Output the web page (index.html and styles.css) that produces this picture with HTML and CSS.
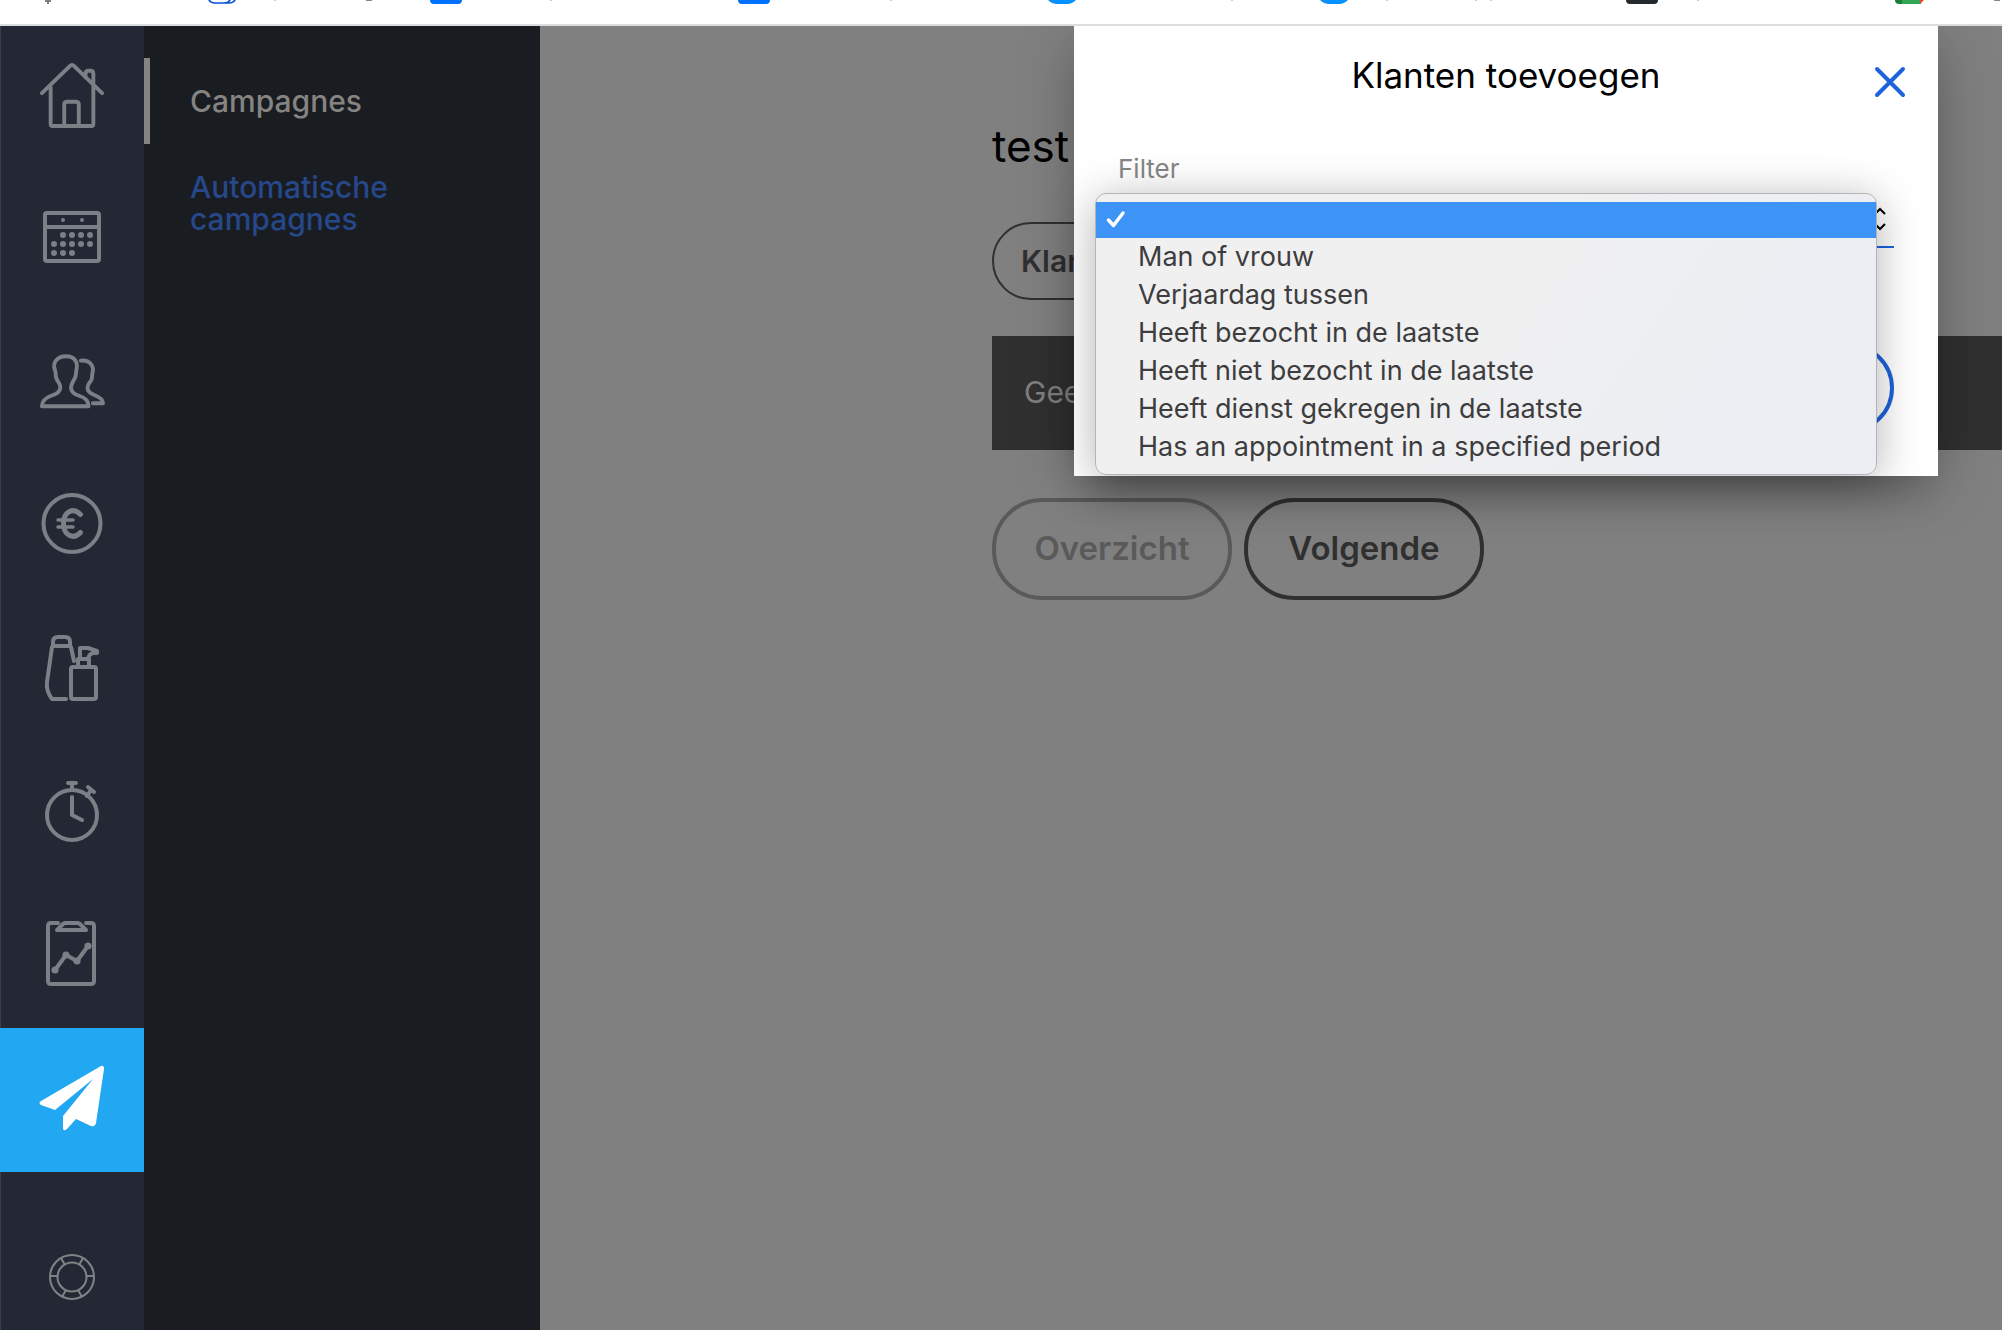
FILE: index.html
```
<!DOCTYPE html>
<html lang="nl">
<head>
<meta charset="utf-8">
<title>Campagnes</title>
<link rel="stylesheet" href="styles.css">
</head>
<body>
<div class="bookmarks" aria-hidden="true">
  <svg width="2002" height="24" viewBox="0 0 2002 24">
    <path d="M45 0h6v2h-2v2h-2V2h-2z" fill="#8a7a7a"/>
    <path d="M208 -3q1 6 7 6h9q6 0 7-6M223 3h6q6 0 7-6" fill="none" stroke="#0a53dc" stroke-width="1.6"/>
    <path d="M366 0h6v1h-6zM1994 0h6v1h-6z" fill="#888"/>
    <path d="M274 0h2v1h-2zM550 0h2v1h-2zM890 0h2v1h-2zM1231 0h2v1h-2zM1386 0h2v1h-2zM1475 0h2v1h-2zM1490 0h2v1h-2zM1697 0h2v1h-2z" fill="#ccc"/>
    <path d="M430 0h32q0 4-4 4h-24q-4 0-4-4zM738 0h32q0 4-4 4h-24q-4 0-4-4z" fill="#0070ff"/>
    <path d="M1048 0h28q-4 4-9 4h-10q-5 0-9-4zM1320 0h28q-4 4-9 4h-10q-5 0-9-4z" fill="#0792ff"/>
    <path d="M1626 0h32q0 4-4 4h-24q-4 0-4-4z" fill="#24292e"/>
    <path d="M1900 0h21v4h-21z" fill="#34a757"/>
    <path d="M1895 0h7v4h-3q-4 0-4-4z" fill="#188038"/>
    <path d="M1920 0h4l-4 4z" fill="#ea4335"/>
  </svg>
</div>

<div class="app">
  <nav class="rail" aria-label="Hoofdmenu">
    <a class="rail-item rail-first" href="#" aria-label="Home">
      <svg class="line-icon" width="66" height="68" viewBox="0 0 68 68">
        <path d="M3 32L32 4Q34 2 36 4L65 32M12 26V64q0 2 2 2h40q2 0 2-2V24M26 66V44q0-3 3-3h9q3 0 3 3v22M48 13V12q0-3 3-3h2q3 0 3 3v13M48 11v5"/>
      </svg>
    </a>
    <a class="rail-item" href="#" aria-label="Agenda">
      <svg class="line-icon" width="60" height="56" viewBox="0 -2 60 56">
        <rect x="3" y="3" width="54" height="48" rx="2"/>
        <path d="M3 17h54"/>
        <g class="solid">
          <circle cx="21" cy="10" r="2"/><circle cx="40" cy="10" r="2"/>
          <circle cx="21" cy="25" r="3"/><circle cx="30" cy="25" r="3"/><circle cx="39" cy="25" r="3"/><circle cx="48" cy="25" r="3"/>
          <circle cx="12" cy="34" r="3"/><circle cx="21" cy="34" r="3"/><circle cx="30" cy="34" r="3"/><circle cx="39" cy="34" r="3"/><circle cx="48" cy="34" r="3"/>
          <circle cx="12" cy="43" r="3"/><circle cx="21" cy="43" r="3"/><circle cx="30" cy="43" r="3"/>
        </g>
      </svg>
    </a>
    <a class="rail-item" href="#" aria-label="Klanten">
      <svg class="line-icon" width="66" height="58" viewBox="0 -2 68 58">
        <path d="M3 54C3 48 8 45 12 43.500C17 42 22 40 22 34.500C22 30 18 28 17.500 24C17 21 17.500 19 16.500 17C13 8 20 2.500 28 2.500C37 2.500 40.500 9 38.500 17C38 19 38.500 22 37 25C35.500 28 33 31 33 35C33 40 37 42 42 43.500C47 45 51 48 51 54Z"/>
        <path d="M43 7C53 6 57 13 55 20C54.500 22 55 24 54 27C53 29 50 31 50 35C50 39 53 41 57 42.500C62 44.500 66 47 66 51H55.500"/>
      </svg>
    </a>
    <a class="rail-item" href="#" aria-label="Kassa">
      <svg class="line-icon" width="64" height="64" viewBox="0 0 64 64">
        <circle cx="32" cy="31.500" r="28.500"/>
        <path d="M40.500 22.500C33 14.500 23.500 20 23.500 31.500s9.500 17 17 9" stroke-width="5"/>
        <path d="M18 28H33M18 35H33" stroke-width="3.500"/>
      </svg>
    </a>
    <a class="rail-item" href="#" aria-label="Producten">
      <svg class="line-icon" width="56" height="68" viewBox="0 0 56 68">
        <path d="M9 12V8q0-5 5-5h7q5 0 5 5v4zM8 13L3 48C2 56 5 61 8 65H22M27 13L30 27"/>
        <rect x="27" y="33" width="25" height="32" rx="2"/>
        <path d="M34 32V25h11v7M36 25V14H44L53 17V19H49Q45 20 44 25"/>
      </svg>
    </a>
    <a class="rail-item" href="#" aria-label="Werktijden">
      <svg class="line-icon" width="56" height="64" viewBox="0 1 56 64">
        <circle cx="28" cy="36" r="25"/>
        <path d="M28 18V36L38 41M24 4h8M28 4v6M44 8L50 13M47 11L43 17"/>
      </svg>
    </a>
    <a class="rail-item" href="#" aria-label="Rapporten">
      <svg class="line-icon" width="54" height="68" viewBox="-1 2 54 68">
        <path d="M12 3H5Q2 3 2 6V61Q2 64 5 64H45Q48 64 48 61V6Q48 3 45 3H40M11 10L17 4Q18 3 19 3H32Q33 3 34 4L40 10ZM9 50L20 35L31 41L42 26"/>
        <g class="solid"><circle cx="9" cy="50" r="3.600"/><circle cx="20" cy="35" r="3.600"/><circle cx="31" cy="41" r="3.600"/><circle cx="42" cy="26" r="3.600"/></g>
      </svg>
    </a>
    <a class="rail-item rail-active" href="#" aria-label="Campagnes" aria-current="page">
      <svg width="68" height="68" viewBox="0 2 68 68">
        <path fill="#fff" d="M63 2Q66 1 66 5L58 59Q57 63 53 62L38 55L29 65Q25 68 25 64V52L55 15L17 46L3 41Q0 39 3 37Z"/>
      </svg>
    </a>
    <a class="rail-help" href="#" aria-label="Hulp">
      <svg class="thin-icon" width="46" height="46" viewBox="0 0 46 46">
        <circle cx="23" cy="23" r="22"/><circle cx="23" cy="23" r="14.500"/>
        <path d="M1 22h8M37 22h8M12 4l4 7M34 4l-4 7M13 43l4-7M33 43l-4-7"/>
      </svg>
    </a>
  </nav>

  <nav class="subnav" aria-label="Campagnes">
    <a class="subnav-link subnav-current" href="#">Campagnes</a>
    <a class="subnav-link" href="#">Automatische campagnes</a>
  </nav>

  <main class="content">
    <h1 class="page-title">test</h1>
    <button class="pill" type="button">Klanten</button>
    <p class="empty">Geen</p>
    <div class="actions">
      <button class="big-button muted" type="button">Overzicht</button>
      <button class="big-button" type="button">Volgende</button>
    </div>
  </main>

  <section class="dialog" role="dialog" aria-labelledby="dialog-title">
    <h2 class="dialog-title" id="dialog-title">Klanten toevoegen</h2>
    <button class="close" type="button" aria-label="Sluiten">
      <svg width="30" height="30" viewBox="0 0 30 30"><path d="M2 2L28 28M28 2L2 28" stroke="#1d63dc" stroke-width="4" stroke-linecap="round"/></svg>
    </button>
    <label class="field-label" for="filter">Filter</label>
    <div class="select-wrap">
      <select class="select" id="filter"><option></option></select>
      <svg class="carets" width="12" height="24" viewBox="0 0 12 24"><path d="M1 7L6 2L11 7M1 17L6 22L11 17" fill="none" stroke="#000" stroke-width="2"/></svg>
      <ul class="menu" role="listbox" aria-label="Filter">
        <li class="option option-selected" role="option" aria-selected="true" aria-label="Geen filter">
          <svg width="20" height="18" viewBox="0 0 20 18"><path d="M2.500 9L7.500 14.500L17 2" fill="none" stroke="#fff" stroke-width="3.500" stroke-linecap="round" stroke-linejoin="round"/></svg>
        </li>
        <li class="option" role="option">Man of vrouw</li>
        <li class="option" role="option">Verjaardag tussen</li>
        <li class="option" role="option">Heeft bezocht in de laatste</li>
        <li class="option" role="option">Heeft niet bezocht in de laatste</li>
        <li class="option" role="option">Heeft dienst gekregen in de laatste</li>
        <li class="option" role="option">Has an appointment in a specified period</li>
      </ul>
    </div>
    <button class="submit" type="button" aria-label="Toevoegen"></button>
  </section>
</div>
</body>
</html>
```
FILE: styles.css
```
* {
  box-sizing: border-box;
}

body {
  margin: 0;
  min-height: 100vh;
  display: flex;
  flex-direction: column;
  font-family: Inter, "Liberation Sans", sans-serif;
  background: #808080;
}

a {
  text-decoration: none;
}

button {
  font-family: inherit;
  cursor: pointer;
}

svg {
  display: block;
  flex: none;
  overflow: visible;
}

.bookmarks {
  height: 26px;
  overflow: hidden;
  background: #fff;
  border-bottom: 2px solid #dcdde1;
}

.app {
  position: relative;
  flex: 1;
  display: flex;
  overflow: hidden;
}

.rail {
  flex: none;
  width: 144px;
  display: flex;
  flex-direction: column;
  background: #232834;
  box-shadow: inset 1px 0 #383d48;
}

.rail-item {
  height: 144px;
  display: flex;
  align-items: center;
  justify-content: center;
}

.rail-first {
  height: 138px;
}

.rail-active {
  background: #22a7f2;
}

.rail-help {
  margin-top: auto;
  padding-bottom: 30px;
  display: flex;
  justify-content: center;
}

.line-icon {
  fill: none;
  stroke: #7c7f86;
  stroke-width: 4;
  stroke-linecap: round;
  stroke-linejoin: round;
}

.line-icon .solid {
  fill: #7c7f86;
  stroke: none;
}

.thin-icon {
  fill: none;
  stroke: #808285;
  stroke-width: 2;
}

.subnav {
  flex: none;
  width: 396px;
  padding-top: 32px;
  background: #191c20;
}

.subnav-link {
  display: block;
  padding: 27px 100px 27px 40px;
  border-left: 6px solid transparent;
  color: #26488a;
  font-size: 30px;
  font-weight: 500;
  line-height: 32px;
}

.subnav-current {
  color: #868482;
  border-left-color: #868482;
}

.content {
  flex: 1;
  min-width: 0;
  padding: 92px 0 0 452px;
}

.page-title {
  margin: 0;
  font-size: 44px;
  font-weight: 400;
  line-height: 56px;
}

.pill {
  display: block;
  height: 78px;
  min-width: 240px;
  margin-top: 48px;
  padding: 0 27px;
  border: 2px solid #303030;
  border-radius: 39px;
  background: none;
  color: #303030;
  font-size: 30px;
  font-weight: 600;
  text-align: left;
}

.empty {
  margin: 36px 0 0;
  padding: 35px 32px 37px;
  background: #303030;
  color: #808080;
  font-size: 30px;
  line-height: 42px;
}

.actions {
  display: flex;
  gap: 12px;
  margin-top: 48px;
}

.big-button {
  min-width: 240px;
  height: 102px;
  padding: 0 20px 2px;
  border: 4px solid #303030;
  border-radius: 50px;
  background: none;
  color: #303030;
  font-size: 33px;
  font-weight: 600;
}

.muted {
  border-color: #5a5a5a;
  color: #5a5a5a;
}

.dialog {
  position: absolute;
  top: 0;
  right: 64px;
  width: 864px;
  padding: 27px 44px 43px;
  display: flex;
  flex-direction: column;
  background: #fff;
  box-shadow: 0 10px 60px rgba(0, 0, 0, 0.2), 0 24px 40px -12px rgba(0, 0, 0, 0.2);
}

.dialog-title {
  margin: 0;
  text-align: center;
  color: #000;
  font-size: 35px;
  font-weight: 400;
  line-height: 44px;
}

.close {
  position: absolute;
  top: 41px;
  right: 33px;
  padding: 0;
  border: 0;
  background: none;
}

.field-label {
  margin-top: 55px;
  color: #858585;
  font-size: 26px;
  line-height: 34px;
}

.select-wrap {
  position: relative;
  height: 62px;
}

.select {
  appearance: none;
  width: 100%;
  height: 62px;
  border: 0;
  border-bottom: 2px solid #1d63dc;
  border-radius: 0;
  background: none;
}

.carets {
  position: absolute;
  top: 21px;
  right: 8px;
}

.menu {
  position: absolute;
  top: 7px;
  left: -23px;
  right: 17px;
  margin: 0;
  padding: 8px 0;
  list-style: none;
  border: 1px solid #b4b4b6;
  border-radius: 11px;
  background: linear-gradient(125deg, #f0f0f0 45%, #eceef3 80%);
  box-shadow: 0 6px 44px rgba(0, 0, 0, 0.3);
}

.option {
  padding-left: 42px;
  color: #3d3d3f;
  font-size: 27px;
  line-height: 38px;
}

.option-selected {
  display: flex;
  align-items: center;
  height: 36px;
  padding-left: 10px;
  background: #3d93f6;
}

.submit {
  align-self: flex-end;
  width: 300px;
  height: 90px;
  margin-top: 95px;
  border: 4px solid #1d63dc;
  border-radius: 45px;
  background: none;
}
```
